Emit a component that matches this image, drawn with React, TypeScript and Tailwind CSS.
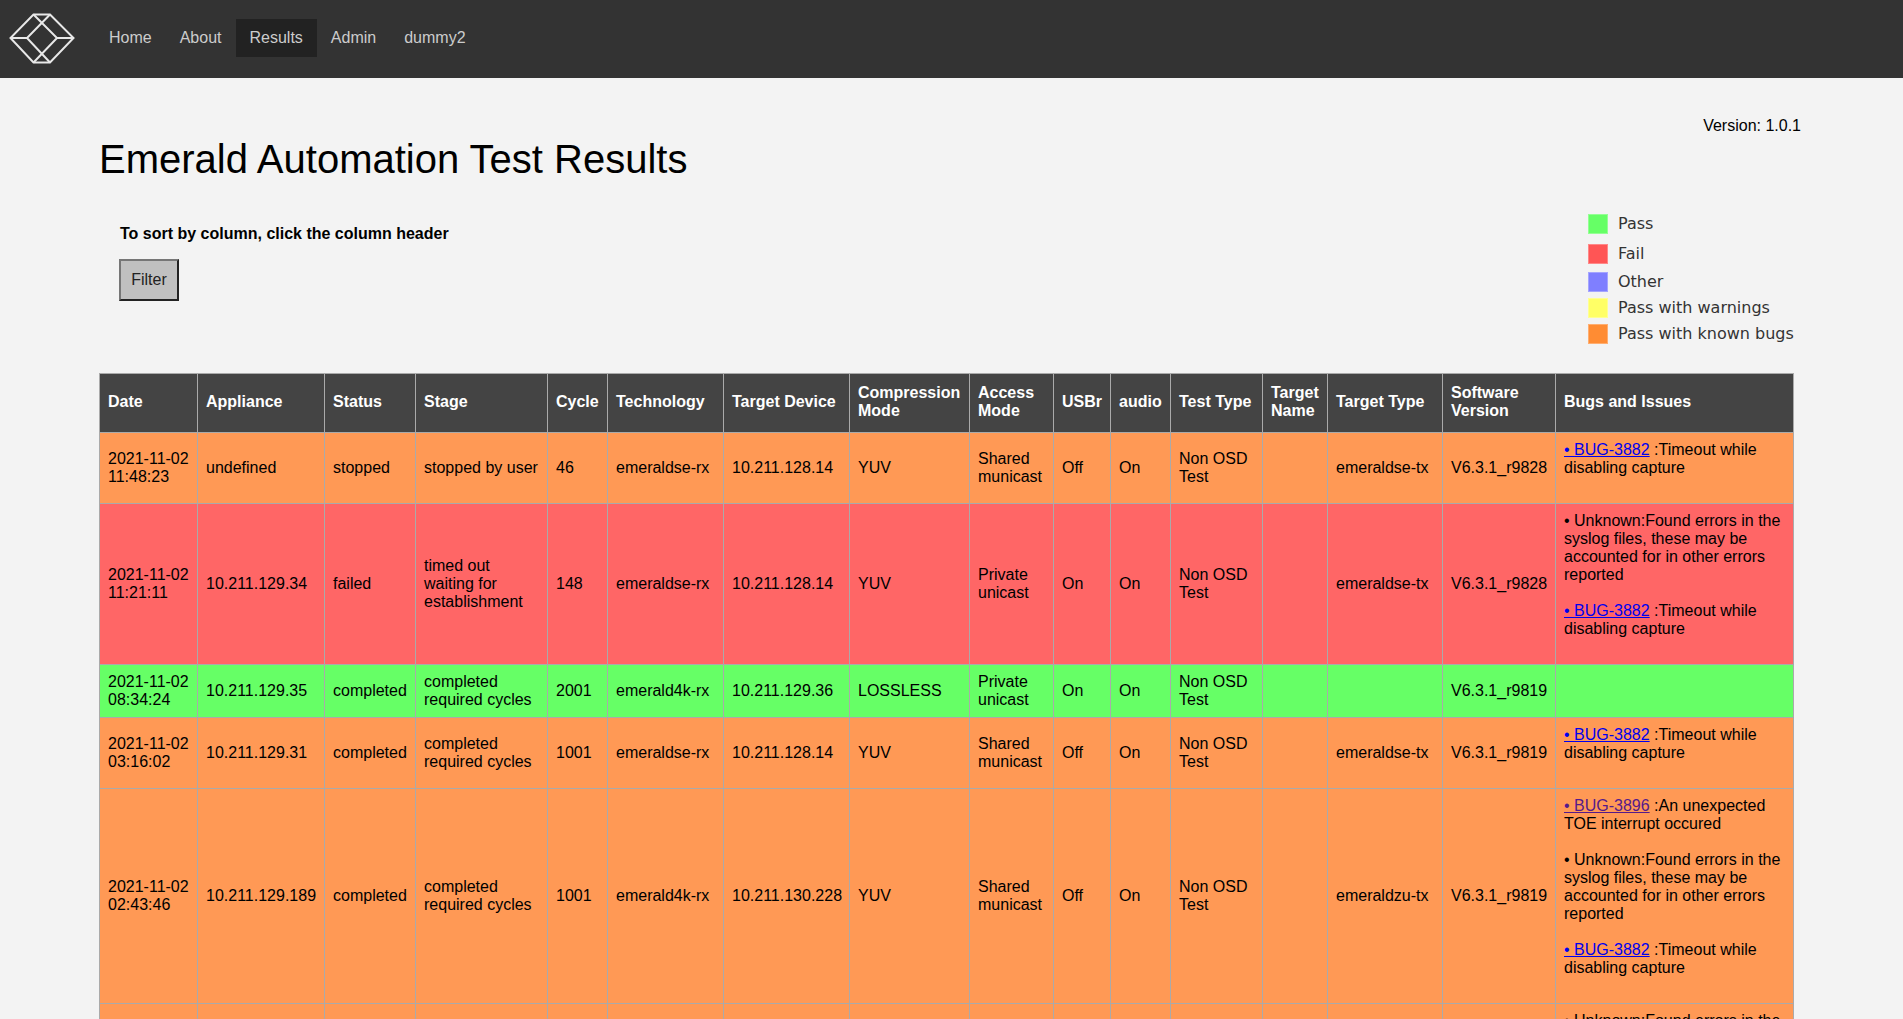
const rows = [
  {
    tone: "bg-[#ff9955]",
    cells: ["2021-11-02 11:48:23", "undefined", "stopped", "stopped by user", "46", "emeraldse-rx", "10.211.128.14", "YUV", "Shared municast", "Off", "On", "Non OSD Test", "", "emeraldse-tx", "V6.3.1_r9828"],
    bugs: [{ id: "BUG-3882", text: ":Timeout while disabling capture" }],
  },
  {
    tone: "bg-[#ff6666]",
    cells: ["2021-11-02 11:21:11", "10.211.129.34", "failed", "timed out waiting for establishment", "148", "emeraldse-rx", "10.211.128.14", "YUV", "Private unicast", "On", "On", "Non OSD Test", "", "emeraldse-tx", "V6.3.1_r9828"],
    bugs: [
      { text: "Unknown:Found errors in the syslog files, these may be accounted for in other errors reported" },
      { id: "BUG-3882", text: ":Timeout while disabling capture" },
    ],
  },
  {
    tone: "bg-[#66ff66]",
    cells: ["2021-11-02 08:34:24", "10.211.129.35", "completed", "completed required cycles", "2001", "emerald4k-rx", "10.211.129.36", "LOSSLESS", "Private unicast", "On", "On", "Non OSD Test", "", "", "V6.3.1_r9819"],
    bugs: [],
  },
  {
    tone: "bg-[#ff9955]",
    cells: ["2021-11-02 03:16:02", "10.211.129.31", "completed", "completed required cycles", "1001", "emeraldse-rx", "10.211.128.14", "YUV", "Shared municast", "Off", "On", "Non OSD Test", "", "emeraldse-tx", "V6.3.1_r9819"],
    bugs: [{ id: "BUG-3882", text: ":Timeout while disabling capture" }],
  },
  {
    tone: "bg-[#ff9955]",
    cells: ["2021-11-02 02:43:46", "10.211.129.189", "completed", "completed required cycles", "1001", "emerald4k-rx", "10.211.130.228", "YUV", "Shared municast", "Off", "On", "Non OSD Test", "", "emeraldzu-tx", "V6.3.1_r9819"],
    bugs: [
      { id: "BUG-3896", text: ":An unexpected TOE interrupt occured", visited: true },
      { text: "Unknown:Found errors in the syslog files, these may be accounted for in other errors reported" },
      { id: "BUG-3882", text: ":Timeout while disabling capture" },
    ],
  },
  {
    tone: "bg-[#ff9955]",
    cells: ["", "", "", "", "", "", "", "", "", "", "", "", "", "", ""],
    bugs: [{ text: "Unknown:Found errors in the syslog files, these may be accounted for in other errors reported" }],
  },
];

const headers = [
  ["Date", "w-[98px]"],
  ["Appliance", "w-[127px]"],
  ["Status", "w-[91px]"],
  ["Stage", "w-[132px]"],
  ["Cycle", "w-[60px]"],
  ["Technology", "w-[116px]"],
  ["Target Device", "w-[126px]"],
  ["Compression Mode", "w-[120px]"],
  ["Access Mode", "w-[84px]"],
  ["USBr", "w-[57px]"],
  ["audio", "w-[60px]"],
  ["Test Type", "w-[92px]"],
  ["Target Name", "w-[65px]"],
  ["Target Type", "w-[115px]"],
  ["Software Version", "w-[113px]"],
  ["Bugs and Issues", "w-[238px]"],
];

const legend = [
  ["Pass", "bg-[#66ff66]", "mt-0"],
  ["Fail", "bg-[#ff5555]", "mt-[11px]"],
  ["Other", "bg-[#7f7fff]", "mt-[9px]"],
  ["Pass with warnings", "bg-[#ffff66]", "mt-[7px]"],
  ["Pass with known bugs", "bg-[#ff8c33]", "mt-[7px]"],
];

const navItems = ["Home", "About", "Results", "Admin", "dummy2"];

function Logo() {
  return (
    <svg width="66" height="52" viewBox="0 0 66 52" fill="none" stroke="#e8e8e8" strokeWidth="2">
      <path d="M24.5 1.5H41L64.5 25L41 49.5H24.5L1.5 25Z" />
      <path d="M1.5 25H18M48 25H64.5" />
      <path d="M41 1.5L18 25L41 49.5M24.5 1.5L48 25L24.5 49.5" />
    </svg>
  );
}

export default function App() {
  return (
    <div className="h-[1019px] overflow-hidden bg-[#f3f3f3] font-['Liberation_Sans',Arial,sans-serif] text-base leading-[18px] text-black">
      <nav className="flex h-[78px] items-center bg-[#333333]">
        <div className="ml-[9px] mr-5 mt-[-1px]">
          <Logo />
        </div>
        <ul className="mb-[2px] flex">
          {navItems.map((item) => (
            <li
              key={item}
              className={
                item === "Results"
                  ? "bg-[#222222] px-[14px] py-[10px] text-[#cccccc]"
                  : "px-[14px] py-[10px] text-[#cccccc]"
              }
            >
              {item}
            </li>
          ))}
        </ul>
      </nav>

      <div className="flex h-[295px] justify-between pl-[99px] pr-[102px]">
        <div>
          <h1 className="mt-[58px] text-[40px] leading-[46px]">Emerald Automation Test Results</h1>
          <div className="ml-[21px] mt-[43px]">
            <p className="font-bold">To sort by column, click the column header</p>
            <button
              type="button"
              className="-ml-px mt-[16px] h-[42px] w-[60px] border-2 border-b-[#222222] border-l-[#767676] border-r-[#222222] border-t-[#767676] bg-[#c0c0c0] text-[#222222]"
            >
              Filter
            </button>
          </div>
        </div>
        <div className="w-[213px]">
          <p className="mt-[39px] text-right">Version: 1.0.1</p>
          <ul className="mt-[79px] font-['DejaVu_Sans',sans-serif] text-[16px] text-[#333333]">
            {legend.map(([label, swatch, gap]) => (
              <li key={label} className={`flex h-[19px] items-center ${gap}`}>
                <span className={`mr-[10px] size-[20px] shrink-0 border border-white/30 ${swatch}`} />
                {label}
              </li>
            ))}
          </ul>
        </div>
      </div>

      <table className="ml-[99px] w-[1695px] table-fixed border-collapse">
        <thead>
          <tr className="bg-[#444444] text-white">
            {headers.map(([label, width]) => (
              <th key={label} className={`border border-[#aaaaaa] px-2 pb-3 pt-[10px] text-left font-bold ${width}`}>
                {label}
              </th>
            ))}
          </tr>
        </thead>
        <tbody>
          {rows.map((row, index) => (
            <tr key={index} className={row.tone}>
              {row.cells.map((cell, cellIndex) => (
                <td key={cellIndex} className="border border-[#aaaaaa] p-2">
                  {cell}
                </td>
              ))}
              <td className="border border-[#aaaaaa] px-2 pb-[26px] pt-2 align-top">
                {row.bugs.map((bug, bugIndex) => (
                  <div key={bugIndex} className={bugIndex > 0 ? "mt-[18px]" : ""}>
                    {bug.id ? (
                      <a
                        href="#"
                        className={bug.visited ? "text-[#551a8b] underline" : "text-[#0000ee] underline"}
                      >
                        • {bug.id}
                      </a>
                    ) : (
                      "• "
                    )}
                    {bug.id ? " " : ""}
                    {bug.text}
                  </div>
                ))}
              </td>
            </tr>
          ))}
        </tbody>
      </table>
    </div>
  );
}
